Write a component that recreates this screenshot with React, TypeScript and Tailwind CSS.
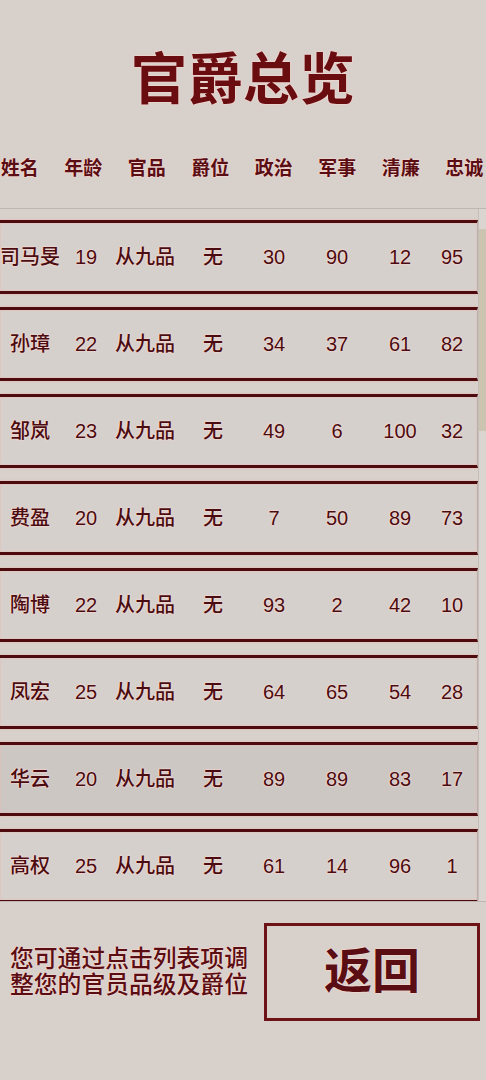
import React from "react";

const FONT = { fontFamily: '"Liberation Sans", "Noto Sans CJK SC", sans-serif' };

interface Official {
    name: string;
    age: number;
    rank: string;
    title: string;
    politics: number;
    military: number;
    integrity: number;
    loyalty: number;
}

const officials: Official[] = [
    { name: "司马旻", age: 19, rank: "从九品", title: "无", politics: 30, military: 90, integrity: 12, loyalty: 95 },
    { name: "孙璋", age: 22, rank: "从九品", title: "无", politics: 34, military: 37, integrity: 61, loyalty: 82 },
    { name: "邹岚", age: 23, rank: "从九品", title: "无", politics: 49, military: 6, integrity: 100, loyalty: 32 },
    { name: "费盈", age: 20, rank: "从九品", title: "无", politics: 7, military: 50, integrity: 89, loyalty: 73 },
    { name: "陶博", age: 22, rank: "从九品", title: "无", politics: 93, military: 2, integrity: 42, loyalty: 10 },
    { name: "凤宏", age: 25, rank: "从九品", title: "无", politics: 64, military: 65, integrity: 54, loyalty: 28 },
    { name: "华云", age: 20, rank: "从九品", title: "无", politics: 89, military: 89, integrity: 83, loyalty: 17 },
    { name: "高权", age: 25, rank: "从九品", title: "无", politics: 61, military: 14, integrity: 96, loyalty: 1 },
];

const headers = ["姓名", "年龄", "官品", "爵位", "政治", "军事", "清廉", "忠诚"];

// widths tuned so each cell lines up under the picture's values
const cellWidths = ["w-[60px]", "w-[52px]", "w-[66px]", "w-[70px]", "w-[52px]", "w-[74px]", "w-[52px]", "w-[52px]"];

const glow = "[text-shadow:0_0_1px_#fbe4de,0_0_2px_#f6d6cf,0_0_2px_#f6d6cf]";

function OfficialRow({ official, highlighted }: { official: Official; highlighted: boolean }) {
    const values = [
        official.name,
        official.age,
        official.rank,
        official.title,
        official.politics,
        official.military,
        official.integrity,
        official.loyalty,
    ];
    return (
        <div
            className={`flex h-[74px] shrink-0 items-center border-y-[3px] border-r border-y-[#4e0b0e] border-r-[#b9b2ae] shadow-[0_0_2px_#eeb2aa,inset_0_0_2px_#eeb2aa] ${
                highlighted ? "bg-[#cdc7c4]" : "bg-[#d6d0cc]"
            }`}
        >
            {values.map((v, i) => (
                <div
                    key={i}
                    className={`${cellWidths[i]} shrink-0 whitespace-nowrap text-center text-[20px] font-medium text-[#4a0c10] ${glow}`}
                >
                    {v}
                </div>
            ))}
        </div>
    );
}

export default function App() {
    return (
        <div className="h-[1080px] w-[486px] overflow-hidden bg-[#d7d0cb]" style={FONT}>
            <h1 className={`pt-[52px] text-center text-[56px] leading-[56px] font-bold text-[#6a0d11] ${glow}`}>
                官爵总览
            </h1>

            <div className="mt-[49px] -ml-[12px] grid grid-cols-[repeat(8,63.5px)]">
                {headers.map((h) => (
                    <div key={h} className={`text-center text-[19px] leading-[24px] font-bold text-[#5a0e13] ${glow}`}>
                        {h}
                    </div>
                ))}
            </div>

            <div className="mt-[27px] flex h-[694px] border-y border-[#bdb6b2]">
                <div className="flex flex-1 flex-col gap-[13px] overflow-hidden pt-[11px]">
                    {officials.map((o, i) => (
                        <OfficialRow key={o.name} official={o} highlighted={i === 6} />
                    ))}
                </div>
                <div className="flex w-[8px] flex-col border-l border-[#c4bdb8] bg-[#dad5d0]">
                    <div className="mt-[20px] h-[202px] bg-[#cdc3b1]" />
                </div>
            </div>

            <div className="mt-[21px] flex items-center pl-[10px]">
                <p className={`w-[244px] text-[23.8px] leading-[26px] font-medium text-[#5a0e13] ${glow}`}>
                    您可通过点击列表项调整您的官员品级及爵位
                </p>
                <button
                    className={`ml-[10px] flex h-[98px] w-[216px] items-center justify-center border-[3px] border-[#6d1217] text-[48px] font-bold text-[#5a0e13] ${glow}`}
                >
                    返回
                </button>
            </div>
        </div>
    );
}
